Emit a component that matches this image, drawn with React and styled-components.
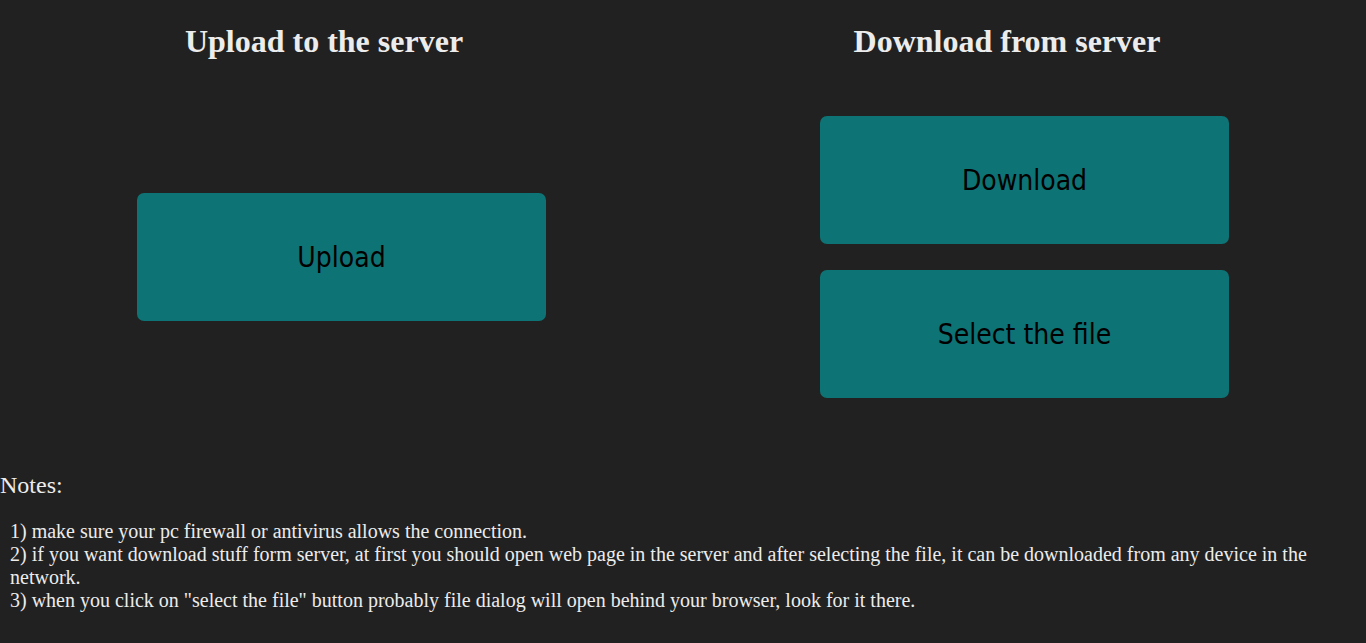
import React from "react";
import styled, { createGlobalStyle } from "styled-components";

const GlobalStyle = createGlobalStyle`
  html, body {
    margin: 0;
    padding: 0;
    background: #212121;
    color: #ececec;
    font-family: "Liberation Serif", "Times New Roman", serif;
  }
`;

const Page = styled.div`
  display: flex;
  flex-direction: column;
  padding-top: 23px;
`;

const Columns = styled.div`
  display: grid;
  grid-template-columns: 1fr 1fr;
  grid-template-rows: auto auto;
  row-gap: 56px;
`;

const Heading = styled.h1`
  margin: 0;
  padding-right: 35px;
  font-size: 32px;
  font-weight: bold;
  text-align: center;
  color: #ececec;
`;

const Cell = styled.div`
  display: flex;
  flex-direction: column;
  align-items: center;
  justify-content: center;
  gap: 26px;
`;

const Button = styled.button`
  width: 409px;
  height: 128px;
  border: none;
  border-radius: 7px;
  background: #0e7374;
  color: #000;
  font-family: "DejaVu Sans Condensed", "DejaVu Sans", sans-serif;
  font-size: 28px;
  cursor: pointer;
`;

const Notes = styled.section`
  margin-top: 74px;
`;

const NotesTitle = styled.div`
  font-size: 24px;
  margin-bottom: 21px;
`;

const NoteList = styled.div`
  padding-left: 10px;
  padding-right: 10px;
  font-size: 20px;
`;

const Note = styled.div``;

export default function App() {
  return (
    <>
      <GlobalStyle />
      <Page>
        <Columns>
          <Heading>Upload to the server</Heading>
          <Heading>Download from server</Heading>
          <Cell>
            <Button>Upload</Button>
          </Cell>
          <Cell>
            <Button>Download</Button>
            <Button>Select the file</Button>
          </Cell>
        </Columns>
        <Notes>
          <NotesTitle>Notes:</NotesTitle>
          <NoteList>
            <Note>1) make sure your pc firewall or antivirus allows the connection.</Note>
            <Note>
              2) if you want download stuff form server, at first you should open web page in the
              server and after selecting the file, it can be downloaded from any device in the
              network.
            </Note>
            <Note>
              3) when you click on "select the file" button probably file dialog will open behind
              your browser, look for it there.
            </Note>
          </NoteList>
        </Notes>
      </Page>
    </>
  );
}
